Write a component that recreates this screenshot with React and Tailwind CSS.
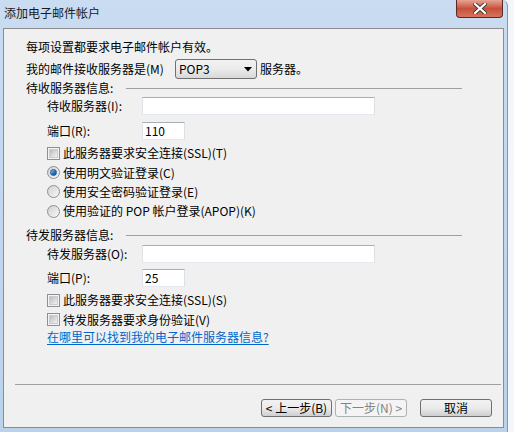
import React from "react";

const font = "font-['Noto_Sans_CJK_SC','Liberation_Sans',sans-serif]";

function TextBox({ value, width }) {
  return (
    <div
      className={`${width} h-[18px] bg-white border border-[#abadb3] border-b-[#e3e9ef] border-r-[#dbdfe6] border-l-[#e2e3ea] flex items-center pl-[2px] text-[12px] leading-none`}
    >
      {value}
    </div>
  );
}

function CheckBox({ label }) {
  return (
    <div className="flex items-center h-full">
      <div className="w-[13px] h-[13px] border border-[#8e8f8f] bg-[#f4f4f4] p-[1px]">
        <div className="w-full h-full bg-gradient-to-br from-[#b8bcc2] to-[#f2f2f2] border border-[#c9cdd2]" />
      </div>
      <span className="ml-[3px]">{label}</span>
    </div>
  );
}

function Radio({ label, checked }) {
  return (
    <div className="flex items-center h-full">
      <div className="w-[13px] h-[13px] rounded-full border border-[#8e8f8f] bg-gradient-to-br from-[#cfd1d4] to-[#f8f8f8] flex items-center justify-center">
        {checked && (
          <div className="w-[7px] h-[7px] rounded-full bg-gradient-to-br from-[#9ed3f7] via-[#2d77c4] to-[#0f4790] border border-[#1d5594]" />
        )}
      </div>
      <span className="ml-[3px]">{label}</span>
    </div>
  );
}

function Header({ label }) {
  return (
    <div className="flex items-center h-[18px]">
      <span className="w-[100px]">{label}</span>
      <div className="w-[336px] h-px bg-[#a0a0a0]" />
    </div>
  );
}

function Button({ label, width, disabled }) {
  return (
    <div
      className={`${width} h-[18px] rounded-[3px] border flex items-center justify-center text-[12px] leading-none ${
        disabled
          ? "border-[#adb2b5] bg-[#f4f4f4] text-[#838383]"
          : "border-[#707070] bg-gradient-to-b from-[#f2f2f2] via-[#ebebeb] to-[#cfcfcf] text-black"
      }`}
    >
      {label}
    </div>
  );
}

export default function App() {
  return (
    <div className={`w-[514px] h-[432px] bg-[#f3f6fa] ${font} text-[12px] text-black`}>
      <div className="w-[508px] h-[432px] bg-gradient-to-b from-[#c9dcf1] to-[#bad2eb] border-r border-[#7f98b3] rounded-tr-[6px] flex flex-col">

        {/* Title bar */}
        <div className="h-[28px] flex items-start">
          <span className="mt-[5px] ml-[4px] text-[12px] leading-[16px] text-[#1a1a1a]">添加电子邮件帐户</span>
          <div className="ml-auto mr-[4px] w-[47px] h-[18px] rounded-b-[4px] border border-t-0 border-[#5a2a24] bg-gradient-to-b from-[#e6a595] via-[#c74f3c] to-[#d7745b] flex items-center justify-center">
            <svg width="14" height="11" viewBox="0 0 14 11">
              <path
                d="M2 1 L12 10 M12 1 L2 10"
                stroke="#3b3b3b"
                strokeWidth="4"
                strokeLinecap="square"
              />
              <path
                d="M2 1 L12 10 M12 1 L2 10"
                stroke="#ffffff"
                strokeWidth="2.2"
                strokeLinecap="square"
              />
            </svg>
          </div>
        </div>

        {/* Content panel */}
        <div className="ml-[3px] w-[501px] h-[400px] border border-[#8c8c8c] bg-[#f0f0f0] flex flex-col">
          <div className="pl-[22px] flex flex-col leading-[14px]">
            <div className="mt-[9px] h-[18px] flex items-center">每项设置都要求电子邮件帐户有效。</div>

            <div className="mt-[3px] h-[20px] flex items-center">
              <span className="w-[149px]">我的邮件接收服务器是(M)</span>
              <div className="w-[82px] h-[20px] rounded-[3px] border border-[#707070] bg-gradient-to-b from-[#f2f2f2] via-[#ebebeb] to-[#d8d8d8] flex items-center pl-[3px] pr-[4px]">
                <span className="leading-none">POP3</span>
                <svg className="ml-auto" width="8" height="5" viewBox="0 0 8 5">
                  <path d="M0 0 H8 L4 4.5 Z" fill="#000" />
                </svg>
              </div>
              <span className="ml-[3px]">服务器。</span>
            </div>

            <Header label="待收服务器信息:" />

            <div className="ml-[21px] flex flex-col">
              <div className="h-[18px] flex items-center">
                <span className="w-[95px]">待收服务器(I):</span>
                <TextBox value="" width="w-[233px]" />
              </div>
              <div className="mt-[7px] h-[18px] flex items-center">
                <span className="w-[95px]">端口(R):</span>
                <TextBox value="110" width="w-[43px]" />
              </div>
              <div className="mt-[3px] h-[20px]">
                <CheckBox label="此服务器要求安全连接(SSL)(T)" />
              </div>
              <div className="h-[19px]">
                <Radio label="使用明文验证登录(C)" checked />
              </div>
              <div className="h-[19px]">
                <Radio label="使用安全密码验证登录(E)" />
              </div>
              <div className="h-[20px]">
                <Radio label="使用验证的 POP 帐户登录(APOP)(K)" />
              </div>
            </div>

            <div className="mt-[5px]">
              <Header label="待发服务器信息:" />
            </div>

            <div className="ml-[21px] flex flex-col">
              <div className="mt-[1px] h-[18px] flex items-center">
                <span className="w-[95px]">待发服务器(O):</span>
                <TextBox value="" width="w-[233px]" />
              </div>
              <div className="mt-[6px] h-[18px] flex items-center">
                <span className="w-[95px]">端口(P):</span>
                <TextBox value="25" width="w-[43px]" />
              </div>
              <div className="mt-[3px] h-[20px]">
                <CheckBox label="此服务器要求安全连接(SSL)(S)" />
              </div>
              <div className="h-[19px]">
                <CheckBox label="待发服务器要求身份验证(V)" />
              </div>
              <div className="h-[16px] flex items-center">
                <a className="text-[#0066cc] underline underline-offset-2">在哪里可以找到我的电子邮件服务器信息?</a>
              </div>
            </div>
          </div>

          {/* Footer */}
          <div className="mt-[39px] ml-[11px] w-[486px] h-px bg-[#a0a0a0]" />
          <div className="mt-[14px] flex justify-end pr-[11px]">
            <Button label="< 上一步(B)" width="w-[71px]" />
            <div className="ml-[3px]">
              <Button label="下一步(N) >" width="w-[72px]" disabled />
            </div>
            <div className="ml-[13px]">
              <Button label="取消" width="w-[72px]" />
            </div>
          </div>
        </div>
      </div>
    </div>
  );
}
